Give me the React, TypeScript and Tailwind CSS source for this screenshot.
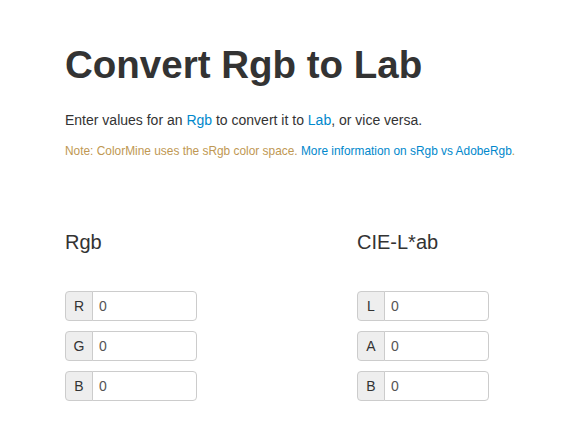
import React from "react";

function Field({ label }: { label: string }) {
  return (
    <div className="flex h-[30px]">
      <span className="flex h-[30px] w-[28px] items-center justify-center rounded-l-[4px] border border-[#ccc] bg-[#eee] text-[14px] text-[#333]">
        {label}
      </span>
      <input
        defaultValue="0"
        className="-ml-px h-[30px] w-[105px] rounded-r-[4px] border border-[#ccc] bg-white px-[6px] text-[14px] text-[#555] outline-none"
        style={{ fontFamily: '"Liberation Sans", Arial, sans-serif' }}
      />
    </div>
  );
}

export default function App() {
  return (
    <div
      className="min-h-[426px] bg-white pl-[65px] pt-[45px] text-[#333]"
      style={{ fontFamily: '"Liberation Sans", Arial, sans-serif' }}
    >
      <h1 className="whitespace-nowrap text-[38.5px] font-bold leading-[40px]">Convert Rgb to Lab</h1>
      <p className="mt-[25px] whitespace-nowrap text-[14px] leading-[20px]">
        Enter values for an <a className="text-[#0088cc]">Rgb</a> to convert it to{" "}
        <a className="text-[#0088cc]">Lab</a>, or vice versa.
      </p>
      <p className="mt-[11px] whitespace-nowrap text-[11.9px] leading-[20px] text-[#c09853]">
        Note: ColorMine uses the sRgb color space.{" "}
        <a className="text-[#0088cc]">More information on sRgb vs AdobeRgb</a>.
      </p>
      <div className="mt-[67px] grid grid-cols-[292px_1fr]">
        <div>
          <h3 className="text-[20px] leading-[28px]">Rgb</h3>
          <div className="mt-[35px] flex flex-col gap-[10px]">
            <Field label="R" />
            <Field label="G" />
            <Field label="B" />
          </div>
        </div>
        <div>
          <h3 className="text-[20px] leading-[28px]">CIE-L*ab</h3>
          <div className="mt-[35px] flex flex-col gap-[10px]">
            <Field label="L" />
            <Field label="A" />
            <Field label="B" />
          </div>
        </div>
      </div>
    </div>
  );
}
